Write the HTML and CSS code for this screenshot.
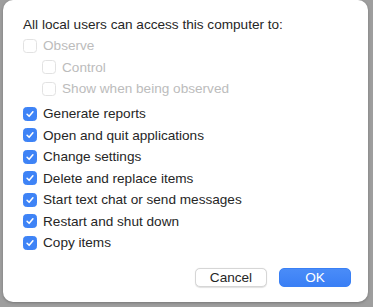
FILE: index.html
```html
<!DOCTYPE html>
<html lang="en">
<head>
    <meta charset="UTF-8">
    <meta name="viewport" content="width=device-width, initial-scale=1.0">
    <title>Remote Management Options</title>
    <link rel="stylesheet" href="styles.css">
</head>
<body>
    <div class="dialog">
        <p class="title">All local users can access this computer to:</p>

        <div class="group">
            <label class="row disabled"><span class="box"></span>Observe</label>
            <label class="row disabled sub"><span class="box"></span>Control</label>
            <label class="row disabled sub"><span class="box"></span>Show when being observed</label>
        </div>

        <div class="group">
            <label class="row"><span class="box checked"><svg viewBox="0 0 14 14"><path d="M3.6 7.3 L6 9.7 L10.4 4.4"/></svg></span>Generate reports</label>
            <label class="row"><span class="box checked"><svg viewBox="0 0 14 14"><path d="M3.6 7.3 L6 9.7 L10.4 4.4"/></svg></span>Open and quit applications</label>
            <label class="row"><span class="box checked"><svg viewBox="0 0 14 14"><path d="M3.6 7.3 L6 9.7 L10.4 4.4"/></svg></span>Change settings</label>
            <label class="row"><span class="box checked"><svg viewBox="0 0 14 14"><path d="M3.6 7.3 L6 9.7 L10.4 4.4"/></svg></span>Delete and replace items</label>
            <label class="row"><span class="box checked"><svg viewBox="0 0 14 14"><path d="M3.6 7.3 L6 9.7 L10.4 4.4"/></svg></span>Start text chat or send messages</label>
            <label class="row"><span class="box checked"><svg viewBox="0 0 14 14"><path d="M3.6 7.3 L6 9.7 L10.4 4.4"/></svg></span>Restart and shut down</label>
            <label class="row"><span class="box checked"><svg viewBox="0 0 14 14"><path d="M3.6 7.3 L6 9.7 L10.4 4.4"/></svg></span>Copy items</label>
        </div>

        <div class="buttons">
            <button class="btn cancel">Cancel</button>
            <button class="btn ok">OK</button>
        </div>
    </div>
</body>
</html>
```

FILE: styles.css
```css
* {
    margin: 0;
    padding: 0;
    box-sizing: border-box;
}

body {
    font-family: "Liberation Sans", Arial, sans-serif;
    font-size: 13.6px;
    color: #262626;
    background-color: #9e9e9e;
    width: 373px;
    height: 307px;
    overflow: hidden;
}

.dialog {
    margin-left: 3px;
    width: 365px;
    height: 302px;
    background: #fff;
    border-radius: 10px;
    padding: 17px 17px 0 20px;
    display: flex;
    flex-direction: column;
    box-shadow: 0 1px 3px rgba(0,0,0,0.25);
}

.title {
    line-height: 16px;
    margin-bottom: 2px;
}

.group + .group {
    margin-top: 3.5px;
}

.row {
    display: flex;
    align-items: center;
    height: 21.5px;
    gap: 6px;
}

.row.sub {
    padding-left: 19px;
}

.box {
    width: 14px;
    height: 14px;
    border-radius: 3.5px;
    border: 1px solid #c4c4c4;
    background: #fff;
    flex-shrink: 0;
    display: flex;
}

.disabled {
    color: #bcbcbc;
}

.disabled .box {
    border-color: #e2e2e2;
}

.box.checked {
    background: #3e83f6;
    border-color: #3e83f6;
}

.box svg {
    width: 12px;
    height: 12px;
    fill: none;
    stroke: #fff;
    stroke-width: 1.8;
    stroke-linecap: round;
    stroke-linejoin: round;
}

.buttons {
    display: flex;
    justify-content: flex-end;
    gap: 12px;
    margin-top: 14px;
}

.btn {
    width: 72px;
    height: 19px;
    border-radius: 5px;
    font-family: inherit;
    font-size: 13.6px;
    line-height: 17px;
}

.cancel {
    background: #fff;
    color: #262626;
    border: 1px solid #d6d6d6;
    box-shadow: 0 0.5px 1px rgba(0,0,0,0.12);
}

.ok {
    background: linear-gradient(#4a8cf8, #3a7ff5);
    color: #fff;
    border: 1px solid #3a80f5;
}
```
